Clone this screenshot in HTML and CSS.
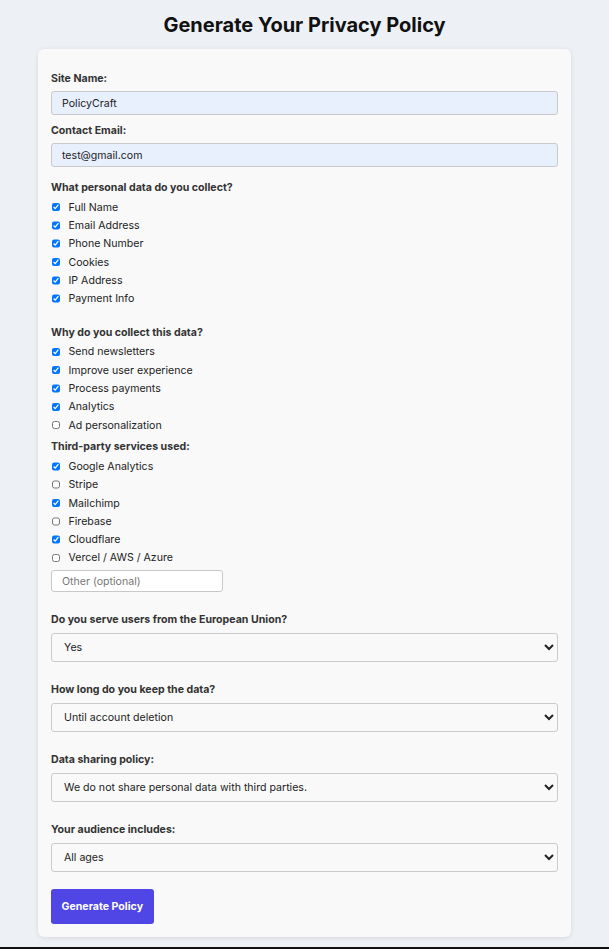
FILE: index.html
```html
<!DOCTYPE html>
<html lang="en">
<head>
<meta charset="utf-8">
<title>Generate Your Privacy Policy</title>
<link rel="stylesheet" href="styles.css">
</head>
<body>
<div class="page">
  <h1 class="title">Generate Your Privacy Policy</h1>
  <form class="card">
    <label class="field-label first" for="site">Site Name:</label>
    <input class="text-input autofill" id="site" type="text" value="PolicyCraft">

    <label class="field-label after-input" for="email">Contact Email:</label>
    <input class="text-input autofill" id="email" type="email" value="test@gmail.com">

    <div class="field-label after-input2">What personal data do you collect?</div>
    <div class="checks">
      <label class="check"><input type="checkbox" checked><span>Full Name</span></label>
      <label class="check"><input type="checkbox" checked><span>Email Address</span></label>
      <label class="check"><input type="checkbox" checked><span>Phone Number</span></label>
      <label class="check"><input type="checkbox" checked><span>Cookies</span></label>
      <label class="check"><input type="checkbox" checked><span>IP Address</span></label>
      <label class="check"><input type="checkbox" checked><span>Payment Info</span></label>
    </div>

    <div class="field-label after-checks-wide">Why do you collect this data?</div>
    <div class="checks">
      <label class="check"><input type="checkbox" checked><span>Send newsletters</span></label>
      <label class="check"><input type="checkbox" checked><span>Improve user experience</span></label>
      <label class="check"><input type="checkbox" checked><span>Process payments</span></label>
      <label class="check"><input type="checkbox" checked><span>Analytics</span></label>
      <label class="check"><input type="checkbox"><span>Ad personalization</span></label>
    </div>

    <div class="field-label after-checks">Third-party services used:</div>
    <div class="checks">
      <label class="check"><input type="checkbox" checked><span>Google Analytics</span></label>
      <label class="check"><input type="checkbox"><span>Stripe</span></label>
      <label class="check"><input type="checkbox" checked><span>Mailchimp</span></label>
      <label class="check"><input type="checkbox"><span>Firebase</span></label>
      <label class="check"><input type="checkbox" checked><span>Cloudflare</span></label>
      <label class="check"><input type="checkbox"><span>Vercel / AWS / Azure</span></label>
    </div>
    <input class="other-input" type="text" placeholder="Other (optional)">

    <label class="field-label section" for="eu">Do you serve users from the European Union?</label>
    <select class="select" id="eu">
      <option>Yes</option>
      <option>No</option>
    </select>

    <label class="field-label section" for="retention">How long do you keep the data?</label>
    <select class="select" id="retention">
      <option>Until account deletion</option>
      <option>30 days</option>
      <option>1 year</option>
    </select>

    <label class="field-label section" for="sharing">Data sharing policy:</label>
    <select class="select" id="sharing">
      <option>We do not share personal data with third parties.</option>
      <option>We share data with trusted partners.</option>
    </select>

    <label class="field-label section" for="audience">Your audience includes:</label>
    <select class="select" id="audience">
      <option>All ages</option>
      <option>Adults only (18+)</option>
    </select>

    <div class="actions">
      <button class="btn" type="button">Generate Policy</button>
    </div>
  </form>
</div>
</body>
</html>
```
FILE: styles.css
```css
* {
  box-sizing: border-box;
}

html, body {
  margin: 0;
  padding: 0;
}

body {
  background: #edf0f5;
  font-family: Inter, "Noto Sans", "Liberation Sans", sans-serif;
  color: #222;
}

.page {
  min-height: 100vh;
  border-bottom: 2px solid #111;
  padding: 12px 38px 0;
}

.title {
  margin: 0 0 10px;
  text-align: center;
  font-size: 20px;
  line-height: 27px;
  font-weight: 700;
  color: #111;
}

.card {
  display: flex;
  flex-direction: column;
  align-items: stretch;
  background: #f9f9f9;
  border-radius: 6px;
  box-shadow: 0 1px 5px rgba(0, 0, 0, 0.1);
  padding: 23px 13px 13px;
}

.field-label {
  display: block;
  font-size: 10.6px;
  line-height: 14px;
  font-weight: 700;
  color: #333;
  margin-bottom: 5px;
}

.field-label.after-input {
  margin-top: 9px;
}

.field-label.after-input2 {
  margin-top: 14px;
  margin-bottom: 3px;
}

.field-label.after-checks-wide {
  margin-top: 18px;
  margin-bottom: 3px;
}

.field-label.after-checks {
  margin-top: 6px;
  margin-bottom: 3px;
}

.field-label.section {
  margin-top: 21px;
  margin-bottom: 6px;
}

.text-input {
  height: 24px;
  width: 100%;
  border: 1px solid #c9c9c9;
  border-radius: 3px;
  padding: 0 10px;
  font-family: inherit;
  font-size: 10.6px;
  color: #222;
  background: #fff;
}

.text-input.autofill {
  background: #e8f0fe;
}

.checks {
  display: flex;
  flex-direction: column;
}

.check {
  display: flex;
  align-items: center;
  height: 18.3px;
  font-size: 10.6px;
  color: #222;
}

.check input {
  width: 8.5px;
  height: 8.5px;
  margin: 0 8.5px 0 0.5px;
  accent-color: #0075ff;
}

.other-input {
  margin-top: 3px;
  width: 172px;
  height: 22px;
  border: 1px solid #c9c9c9;
  border-radius: 3px;
  padding: 0 10px;
  font-family: inherit;
  font-size: 10.6px;
  background: #fff;
  color: #222;
}

.other-input::placeholder {
  color: #777;
}

.select {
  width: 100%;
  height: 29px;
  border: 1px solid #cbcbcb;
  border-radius: 3px;
  padding: 0 8px;
  font-family: inherit;
  font-size: 10.6px;
  color: #222;
  background: #f9f9f9;
}

.actions {
  margin-top: 17px;
  display: flex;
}

.btn {
  height: 35px;
  padding: 0 10.5px;
  border: none;
  border-radius: 3px;
  background: #4f46e5;
  color: #fff;
  font-family: inherit;
  font-size: 10.6px;
  font-weight: 700;
}
```
